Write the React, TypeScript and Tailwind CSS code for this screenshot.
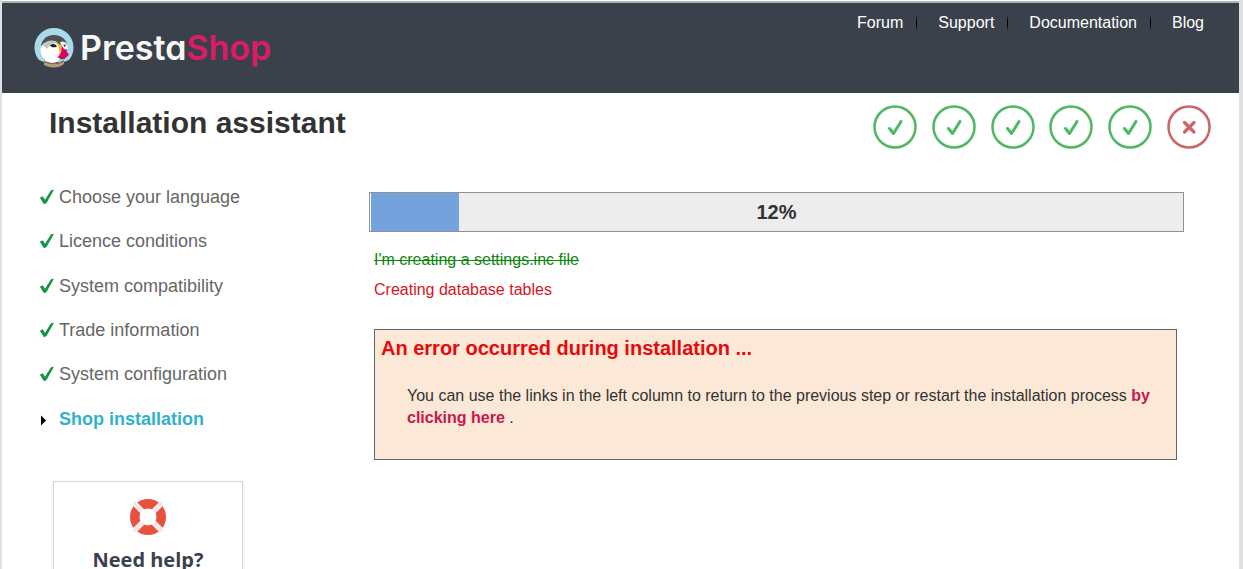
import { ReactNode } from 'react'

interface Step {
  label: string
  done: boolean
}

const links = ['Forum', 'Support', 'Documentation', 'Blog']

const steps: Step[] = [
  { label: 'Choose your language', done: true },
  { label: 'Licence conditions', done: true },
  { label: 'System compatibility', done: true },
  { label: 'Trade information', done: true },
  { label: 'System configuration', done: true },
  { label: 'Shop installation', done: false }
]

const progress = 12

function Logo() {
  return (
    <a href="#" className="flex items-center gap-1.5" aria-label="PrestaShop">
      <svg className="h-10 w-10" viewBox="0 0 40 40">
        <path d="M5 32A19.500 19.500 0 1 1 35 32L30 34H10Z" fill="#a9d9ea" />
        <path d="M7 22C6 13 12 7 20 7C28 7 33 12 33.500 19L31 31L10 32Z" fill="#4d4f51" />
        <path d="M6.500 20C8 15 13 13 18 13.500C24 14 27 19 27 25C27 32 23 35 18 35C11 35 6 28 6.500 20Z" fill="#fff" />
        <path d="M8 18C12 12 20 11 24 15C19 15 16 17 13 21C11 19 10 18 8 18Z" fill="#c4c6c8" />
        <path d="M16 17.500C18 15 22 15.500 23 18.500C20 20 17.500 19.500 16 17.500Z" fill="#232323" />
        <path d="M26 14C31 12 34 16 34 21L29 22Z" fill="#f4f4f4" />
        <path d="M29.500 16.500L32 17L30.500 19Z" fill="#232323" />
        <path d="M22 15C26 15 29 18 29 23L25 28C26 23 25 18 22 15Z" fill="#f8b334" />
        <path d="M27.500 18L35 26.500C33 30 29 31 23 29.500C27 27 28 23 27.500 18Z" fill="#df0067" />
        <path d="M10 32.500C16 36 25 36 30 31.500V36C25 40.500 16 40.500 10 37Z" fill="#b59b7c" />
        <path d="M10 33.500C16 36.500 25 36.500 30 33" fill="none" stroke="#77614a" strokeWidth="1" />
      </svg>
      <span className="font-['Inter',sans-serif] text-[34px] leading-9 font-semibold text-[#f7f7f8] [font-feature-settings:'cv11']">
        Presta<span className="text-[#df1a66]">Shop</span>
      </span>
    </a>
  )
}

function StepBadge({ done }: { done: boolean }) {
  return (
    <svg
      className={`h-11 w-11 ${done ? 'text-[#4fb862]' : 'text-[#cf6468]'}`}
      viewBox="0 0 44 44"
      fill="none"
      stroke="currentColor"
      strokeLinecap="round"
      strokeLinejoin="round"
    >
      <circle cx="22" cy="22" r="20.500" strokeWidth="2.500" />
      {done ? (
        <path d="M16.500 23.500L20.500 28.500L28 16.500" strokeWidth="3" />
      ) : (
        <path d="M17.500 17.500L27 27M27 17.500L17.500 27" strokeWidth="3.200" />
      )}
    </svg>
  )
}

function Tick() {
  return (
    <svg className="h-4 w-4" viewBox="0 0 16 16">
      <path d="M0.800 8.800L3.800 7.300L6 10.800L12 1.200L15 0.700L7.500 14L5 15.300Z" fill="#179343" />
    </svg>
  )
}

function Arrow() {
  return (
    <svg className="h-4 w-4" viewBox="0 0 16 16">
      <path d="M2 4.500L7 9.500L2 14.500Z" fill="#000" />
    </svg>
  )
}

function Lifebuoy() {
  return (
    <svg className="h-9 w-9" viewBox="0 0 36 36">
      <circle cx="18" cy="18" r="18" fill="#e8503f" />
      <path d="M5.500 5.500L30.500 30.500M30.500 5.500L5.500 30.500" stroke="#f1eae8" strokeWidth="5.500" strokeLinecap="round" />
      <circle cx="18" cy="18" r="8.500" fill="#fff" />
    </svg>
  )
}

function LogLine({ className, children }: { className: string; children: ReactNode }) {
  return <p className={`text-base leading-[30px] ${className}`}>{children}</p>
}

export default function App() {
  return (
    <div className="h-screen overflow-hidden border-r-4 border-l-2 border-[#e0e0e0] bg-white pt-px font-['Liberation_Sans',Arial,sans-serif] text-[#333]">
      <header className="flex h-[92px] items-start justify-between border-t-2 border-[#b0b4b4] bg-[#3b414b] pr-[35px] pl-8">
        <div className="pt-[25px]">
          <Logo />
        </div>
        <nav className="flex items-center pt-2">
          {links.map((link, i) => (
            <div key={link} className="flex items-center">
              {i > 0 && (
                <span className="mr-[21px] ml-[13px] h-4 w-px bg-linear-to-b from-[#3b414b] via-black to-[#3b414b]" />
              )}
              <a href="#" className="text-base leading-6 text-white">
                {link}
              </a>
            </div>
          ))}
        </nav>
      </header>

      <div className="flex items-start justify-between pt-3 pr-7 pl-[47px]">
        <h1 className="text-[30px] leading-9 font-bold">Installation assistant</h1>
        <div className="flex w-[338px] justify-between">
          {steps.map((step) => (
            <StepBadge key={step.label} done={step.done} />
          ))}
        </div>
      </div>

      <div className="flex pt-[26px] pr-[55px] pl-[37px]">
        <aside className="w-[330px] shrink-0">
          <ol className="grid h-[266px] auto-rows-fr">
            {steps.map((step) => (
              <li key={step.label} className="flex items-center gap-1">
                {step.done ? <Tick /> : <Arrow />}
                <a
                  href="#"
                  className={`text-lg leading-6 ${step.done ? 'text-[#666]' : 'font-bold text-[#33b1cb]'}`}
                >
                  {step.label}
                </a>
              </li>
            ))}
          </ol>
          <a
            href="#"
            className="mt-10 ml-3.5 flex h-[190px] w-[190px] flex-col items-center border border-[#d4d4d4] pt-[17px] shadow-sm"
          >
            <Lifebuoy />
            <span className="mt-[9px] font-['Open_Sans',sans-serif] text-xl leading-8 font-bold text-[#3b414b]">
              Need help?
            </span>
          </a>
        </aside>

        <main className="min-w-0 flex-1 pt-[17px]">
          <div
            role="progressbar"
            aria-valuenow={progress}
            className="grid h-10 border border-[#919191] bg-[#ededed]"
          >
            <div
              className="col-start-1 row-start-1 border-l border-white bg-[#74a2dc]"
              style={{ width: `${progress - 1}%` }}
            />
            <span className="col-start-1 row-start-1 self-center text-center text-xl font-bold">
              {progress}%
            </span>
          </div>

          <div className="mt-[13px] pl-[5px]">
            <LogLine className="text-[#108510] line-through">I'm creating a settings.inc file</LogLine>
            <LogLine className="text-[#d8141c]">Creating database tables</LogLine>
          </div>

          <section className="mt-6 mr-[7px] ml-[5px] border border-[#666] bg-[#fbe8d6] px-1.5 pt-1 pb-[30px]">
            <h2 className="text-xl leading-7 font-bold text-[#e60a0c]">
              An error occurred during installation ...
            </h2>
            <p className="mt-[23px] pr-2 pl-[26px] text-base leading-[22px]">
              You can use the links in the left column to return to the previous step or restart the
              installation process{' '}
              <a href="#" className="font-bold text-[#c8164f]">
                by clicking here
              </a>{' '}
              .
            </p>
          </section>
        </main>
      </div>
    </div>
  )
}
